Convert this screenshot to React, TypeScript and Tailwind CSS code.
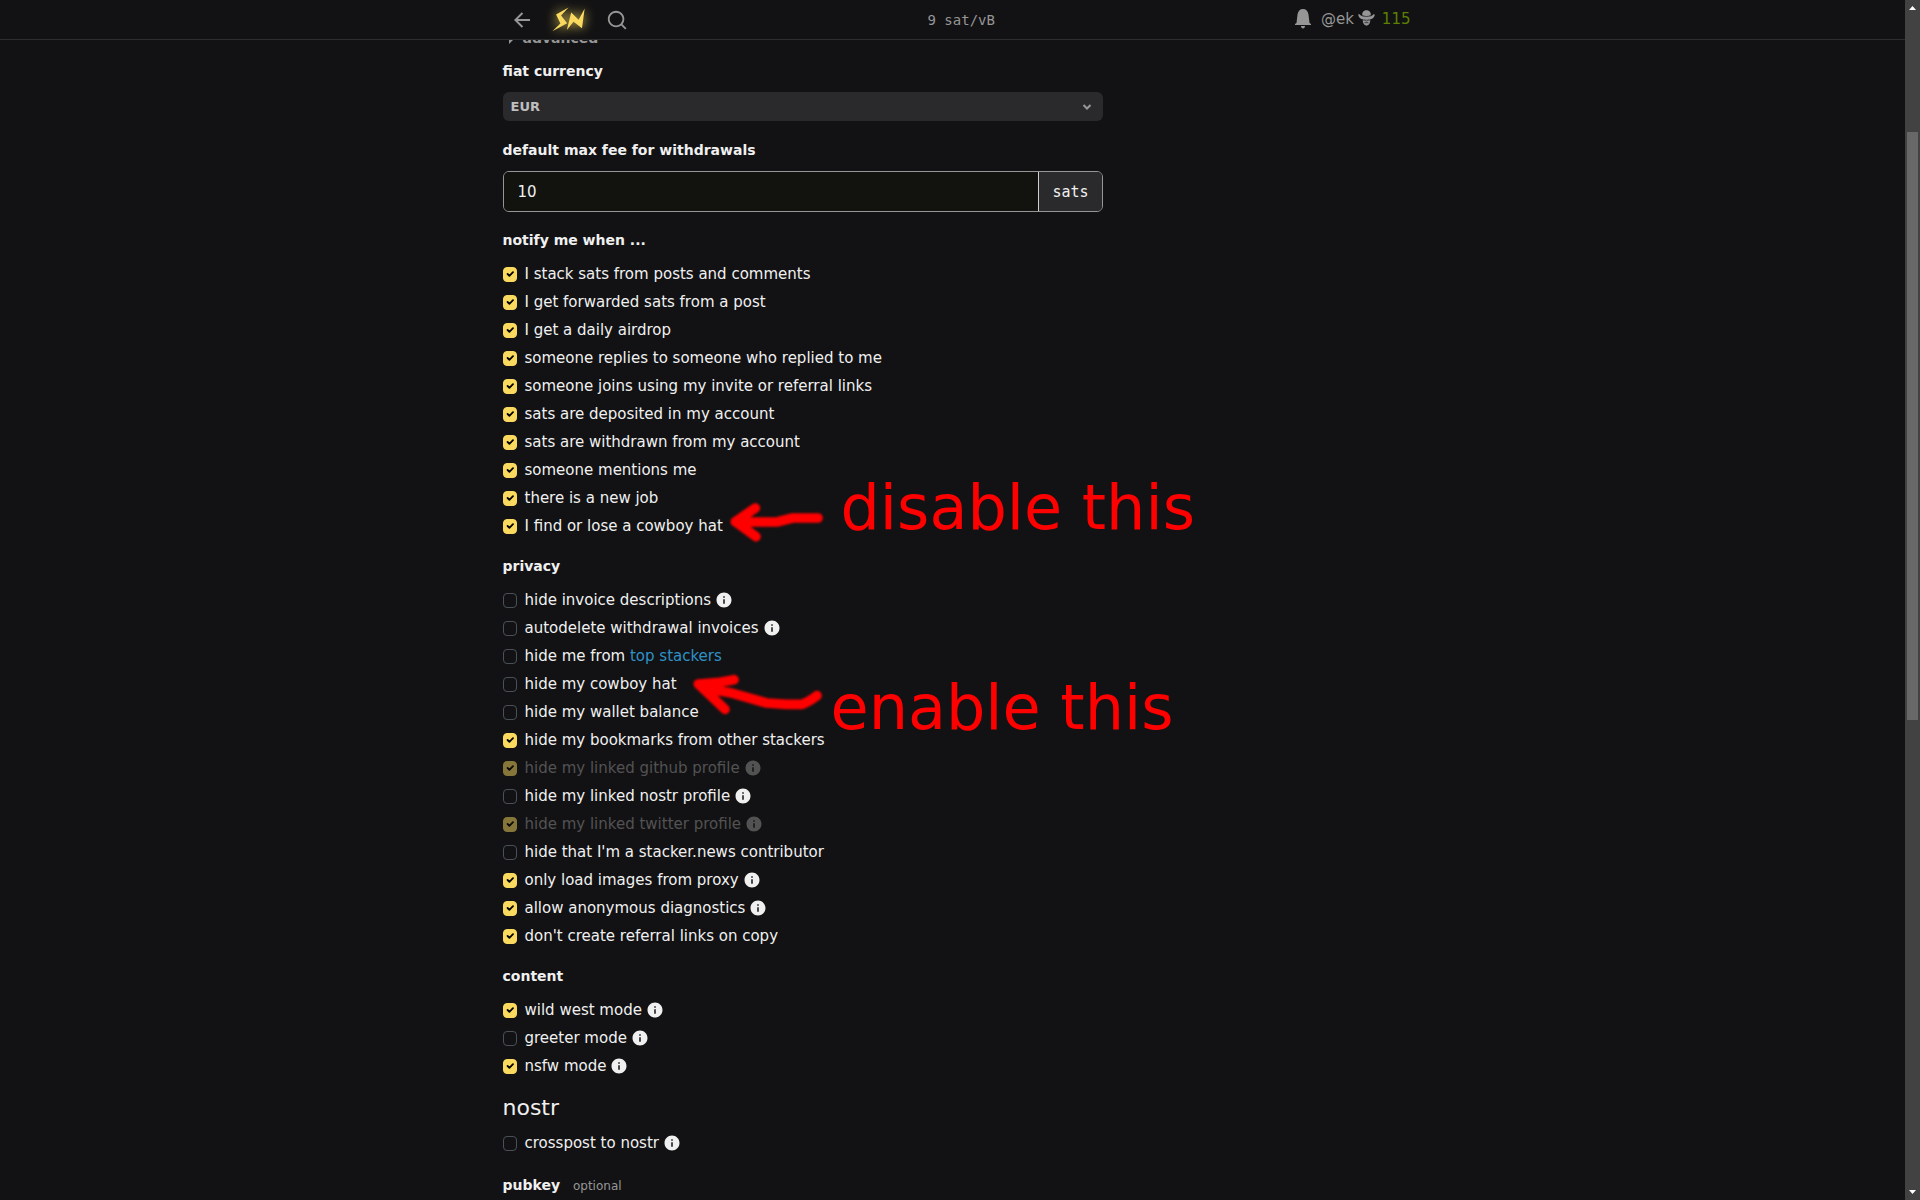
import { useState } from 'react';
import type { ReactNode } from 'react';

type Option = {
  id: string;
  label: ReactNode;
  checked?: boolean;
  disabled?: boolean;
  info?: boolean;
};

const notifications: Option[] = [
  { id: 'noteItemSats', label: 'I stack sats from posts and comments', checked: true },
  { id: 'noteForwardedSats', label: 'I get forwarded sats from a post', checked: true },
  { id: 'noteEarning', label: 'I get a daily airdrop', checked: true },
  { id: 'noteAllDescendants', label: 'someone replies to someone who replied to me', checked: true },
  { id: 'noteInvites', label: 'someone joins using my invite or referral links', checked: true },
  { id: 'noteDeposits', label: 'sats are deposited in my account', checked: true },
  { id: 'noteWithdrawals', label: 'sats are withdrawn from my account', checked: true },
  { id: 'noteMentions', label: 'someone mentions me', checked: true },
  { id: 'noteJobIndicator', label: 'there is a new job', checked: true },
  { id: 'noteCowboyHat', label: 'I find or lose a cowboy hat', checked: true },
];

const privacy: Option[] = [
  { id: 'hideInvoiceDesc', label: 'hide invoice descriptions', info: true },
  { id: 'autoDropBolt11s', label: 'autodelete withdrawal invoices', info: true },
  {
    id: 'hideFromTopUsers',
    label: (
      <>
        hide me from <a href="#top" className="text-[#2f91c6]">top stackers</a>
      </>
    ),
  },
  { id: 'hideCowboyHat', label: 'hide my cowboy hat' },
  { id: 'hideWalletBalance', label: 'hide my wallet balance' },
  { id: 'hideBookmarks', label: 'hide my bookmarks from other stackers', checked: true },
  { id: 'hideGithub', label: 'hide my linked github profile', checked: true, disabled: true, info: true },
  { id: 'hideNostr', label: 'hide my linked nostr profile', info: true },
  { id: 'hideTwitter', label: 'hide my linked twitter profile', checked: true, disabled: true, info: true },
  { id: 'hideIsContributor', label: "hide that I'm a stacker.news contributor" },
  { id: 'imgproxyOnly', label: 'only load images from proxy', checked: true, info: true },
  { id: 'diagnostics', label: 'allow anonymous diagnostics', checked: true, info: true },
  { id: 'noReferralLinks', label: "don't create referral links on copy", checked: true },
];

const content: Option[] = [
  { id: 'wildWestMode', label: 'wild west mode', checked: true, info: true },
  { id: 'greeterMode', label: 'greeter mode', info: true },
  { id: 'nsfwMode', label: 'nsfw mode', checked: true, info: true },
];

function InfoIcon() {
  return (
    <svg viewBox="0 0 24 24" className="size-[18px]" fill="currentColor">
      <path d="M12 22C6.477 22 2 17.523 2 12S6.477 2 12 2s10 4.477 10 10-4.477 10-10 10zm-1-11v6h2v-6h-2zm0-4v2h2V7h-2z" />
    </svg>
  );
}

function BellIcon() {
  return (
    <svg viewBox="0 0 16 20" className="h-5 w-4" fill="currentColor">
      <path d="M0 16v-1l1.500-1L2.500 5.500C3 2 5 0 8 0s5 2 5.500 5.500l1 8.500 1.500 1v1zM6 17h4c0 1.500-.8 2.500-2 2.500S6 18.500 6 17z" />
    </svg>
  );
}

function CowboyIcon() {
  return (
    <svg viewBox="236 31 50 48" className="mb-[3px] h-4 w-[17px]" fill="currentColor">
      <path d="M248 48C247 36 254 32 261 32s14 4 13 16c-7 6-19 6-26 0z" />
      <path d="M236 45l3-2c9 12 35 12 44 0l3 2c-1 7-6 12-13 14H249c-7-2-12-7-13-14z" />
      <path d="M250 59h22c1 10-3 18-11 19-8-1-12-9-11-19z" />
      <path d="M247 46c7 6 21 6 28 0M251 62c4-3 7 2 10 2s6-5 10-2M255 69h12" fill="none" stroke="#121214" strokeWidth="2" />
    </svg>
  );
}

function Checkbox({ id, label, checked = false, disabled, info }: Option) {
  const [on, setOn] = useState(checked);
  return (
    <div className={`flex h-7 items-center gap-1 ${disabled ? 'text-[#525253]' : ''}`}>
      <span className={`relative mr-1 flex shrink-0 ${disabled ? 'opacity-50' : ''}`}>
        <input
          id={id}
          type="checkbox"
          checked={on}
          disabled={disabled}
          onChange={(e) => setOn(e.target.checked)}
          className="h-[15px] w-[14px] appearance-none rounded-[4px] border border-[#495057] checked:border-[#fada5e] checked:bg-[#fada5e]"
        />
        {on && (
          <svg viewBox="0 0 20 20" className="pointer-events-none absolute inset-0 m-auto size-3" fill="none" stroke="#000" strokeWidth="3" strokeLinecap="round" strokeLinejoin="round">
            <path d="m6 10 3 3 6-6" />
          </svg>
        )}
      </span>
      <label htmlFor={id}>{label}</label>
      {info && (
        <button type="button" aria-label="more info" disabled={disabled}>
          <InfoIcon />
        </button>
      )}
    </div>
  );
}

function Group({ title, options }: { title: string; options: Option[] }) {
  return (
    <fieldset className="mb-[14px]">
      <legend className="mb-2 text-sm leading-6 font-bold">{title}</legend>
      {options.map((o) => (
        <Checkbox key={o.id} {...o} />
      ))}
    </fieldset>
  );
}

function Header() {
  return (
    <header className="relative z-10 h-10 border-b border-[#2d2d2f] bg-[#121214] text-[#969696]">
      <div className="mx-auto flex h-full max-w-[916px] items-center justify-between pl-[15px]">
        <div className="flex items-center">
          <button type="button" aria-label="back" className="mr-[18px]">
            <svg viewBox="0 0 24 24" className="size-6" fill="currentColor">
              <path d="M7.828 11H20v2H7.828l5.364 5.364-1.414 1.414L4 12l7.778-7.778 1.414 1.414z" />
            </svg>
          </button>
          <a href="#home" aria-label="stacker news" className="mr-[21px]">
            <svg viewBox="186 23 98 74" className="h-[25px] w-[33px] overflow-visible fill-[#fada5e] drop-shadow-[0_0_6px_#fada5e]">
              <path d="M235 24 213 48l18 23-44 24 24-23-13-27zM230 91l13-52 22 22 18-34-8 59-25-19z" />
            </svg>
          </a>
          <button type="button" aria-label="search">
            <svg viewBox="0 0 24 24" className="size-[22px]" fill="currentColor">
              <path d="m18.031 16.617 4.283 4.282-1.415 1.415-4.282-4.283A8.96 8.96 0 0 1 11 20c-4.968 0-9-4.032-9-9s4.032-9 9-9 9 4.032 9 9a8.96 8.96 0 0 1-1.969 5.617zm-2.006-.742A6.977 6.977 0 0 0 18 11c0-3.868-3.133-7-7-7-3.868 0-7 3.132-7 7 0 3.867 3.132 7 7 7a6.977 6.977 0 0 0 4.875-1.975l.15-.15z" />
            </svg>
          </button>
        </div>
        <span className="font-['DejaVu_Sans_Mono',monospace] text-sm">9 sat/vB</span>
        <div className="flex items-center pb-px">
          <button type="button" aria-label="notifications" className="mr-[10px]">
            <BellIcon />
          </button>
          <a href="#ek" className="mr-[7px] flex items-center gap-1">
            @ek
            <CowboyIcon />
          </a>
          <a href="#wallet" className="text-[#5c8001]">115</a>
        </div>
      </div>
    </header>
  );
}

function Scrollbar() {
  return (
    <div className="flex w-[15px] shrink-0 flex-col items-center justify-between bg-[#424242] py-[6px]">
      <svg viewBox="0 0 7 4" className="h-1 w-[7px] fill-white">
        <path d="M0 4h7L3.500 0z" />
      </svg>
      <div className="flex w-[11px] flex-1 flex-col py-[2px]">
        <div className="h-[10.2%]" />
        <div className="h-[50%] bg-[#686868]" />
      </div>
      <svg viewBox="0 0 7 4" className="h-1 w-[7px] fill-white">
        <path d="M0 0h7L3.500 4z" />
      </svg>
    </div>
  );
}

// hand drawn notes on top of the form
function Notes() {
  return (
    <div className="pointer-events-none text-[62px] leading-none whitespace-nowrap text-[#ff0000]">
      <svg viewBox="0 0 600 180" className="absolute top-[464px] left-[177px] h-[60px] w-[200px] overflow-visible blur-[1px]" fill="none" stroke="currentColor" strokeWidth="29" strokeLinecap="round" strokeLinejoin="round">
        <path d="M226 54 166 95l62 45M172 96h118l48-12h76" />
      </svg>
      <p className="absolute top-[451px] left-[338px]">disable this</p>
      <svg viewBox="0 0 600 240" className="absolute top-[634px] left-[177px] h-20 w-[200px] overflow-visible blur-[1px]" fill="none" stroke="currentColor" strokeWidth="29" strokeLinecap="round" strokeLinejoin="round">
        <path d="m162 59-42 8-65 5 80 76M70 84l80 14 110 31 60 4h45q20-6 46-26" />
      </svg>
      <p className="absolute top-[651px] left-[328px]">enable this</p>
    </div>
  );
}

export default function App() {
  return (
    <div className="flex h-screen overflow-hidden bg-[#121214] font-['DejaVu_Sans',sans-serif] text-[15px] leading-6 text-[#f0f0f0]">
      <div className="min-w-0 flex-1">
        <Header />
        <main className="relative mx-auto -mt-[14px] max-w-[900px]">
          <form className="max-w-[600px]">
            <button type="button" className="mb-[9px] flex items-center gap-2 pl-1 text-sm leading-6 font-bold text-[#969696]">
              <svg viewBox="0 0 8 12" className="h-3 w-2 fill-current">
                <path d="M2 0 8 6 2 12z" />
              </svg>
              advanced
            </button>

            <label htmlFor="fiatCurrency" className="mb-[9px] block text-sm leading-6 font-bold">fiat currency</label>
            <div className="relative mb-[17px]">
              <select id="fiatCurrency" className="block h-[29px] w-full appearance-none rounded-md bg-[#2a2a2c] px-2 text-[13px] font-bold text-[#bfbfbf]">
                <option>EUR</option>
                <option>USD</option>
              </select>
              <svg viewBox="0 0 8 6" className="pointer-events-none absolute top-3 right-3 h-[6px] w-2" fill="none" stroke="#969696" strokeWidth="2">
                <path d="m0.500 1 3.500 3.500L7.500 1" />
              </svg>
            </div>

            <label htmlFor="withdrawMaxFeeDefault" className="mb-[9px] block text-sm leading-6 font-bold">default max fee for withdrawals</label>
            <div className="mb-4 flex h-[41px] overflow-hidden rounded-md border border-[#969696]">
              <input id="withdrawMaxFeeDefault" defaultValue="10" className="min-w-0 flex-1 bg-[#12120f] px-[14px]" />
              <span className="flex items-center border-l border-[#d0d0d0] bg-[#2a2a2c] px-[13px] font-['DejaVu_Sans_Mono',monospace]">sats</span>
            </div>

            <Group title="notify me when ..." options={notifications} />
            <Group title="privacy" options={privacy} />
            <Group title="content" options={content} />

            <h4 className="mb-[7px] text-[22px] leading-7">nostr</h4>
            <Checkbox id="nostrCrossposting" label="crosspost to nostr" info />
            <label htmlFor="nostrPubkey" className="mt-4 block text-sm leading-6 font-bold">
              pubkey <small className="ml-2 text-xs font-normal text-[#969696]">optional</small>
            </label>
            <input id="nostrPubkey" className="mt-2 h-[41px] w-full rounded-md border border-[#969696] bg-[#12120f] px-[14px]" />
          </form>
          <Notes />
        </main>
      </div>
      <Scrollbar />
    </div>
  );
}
